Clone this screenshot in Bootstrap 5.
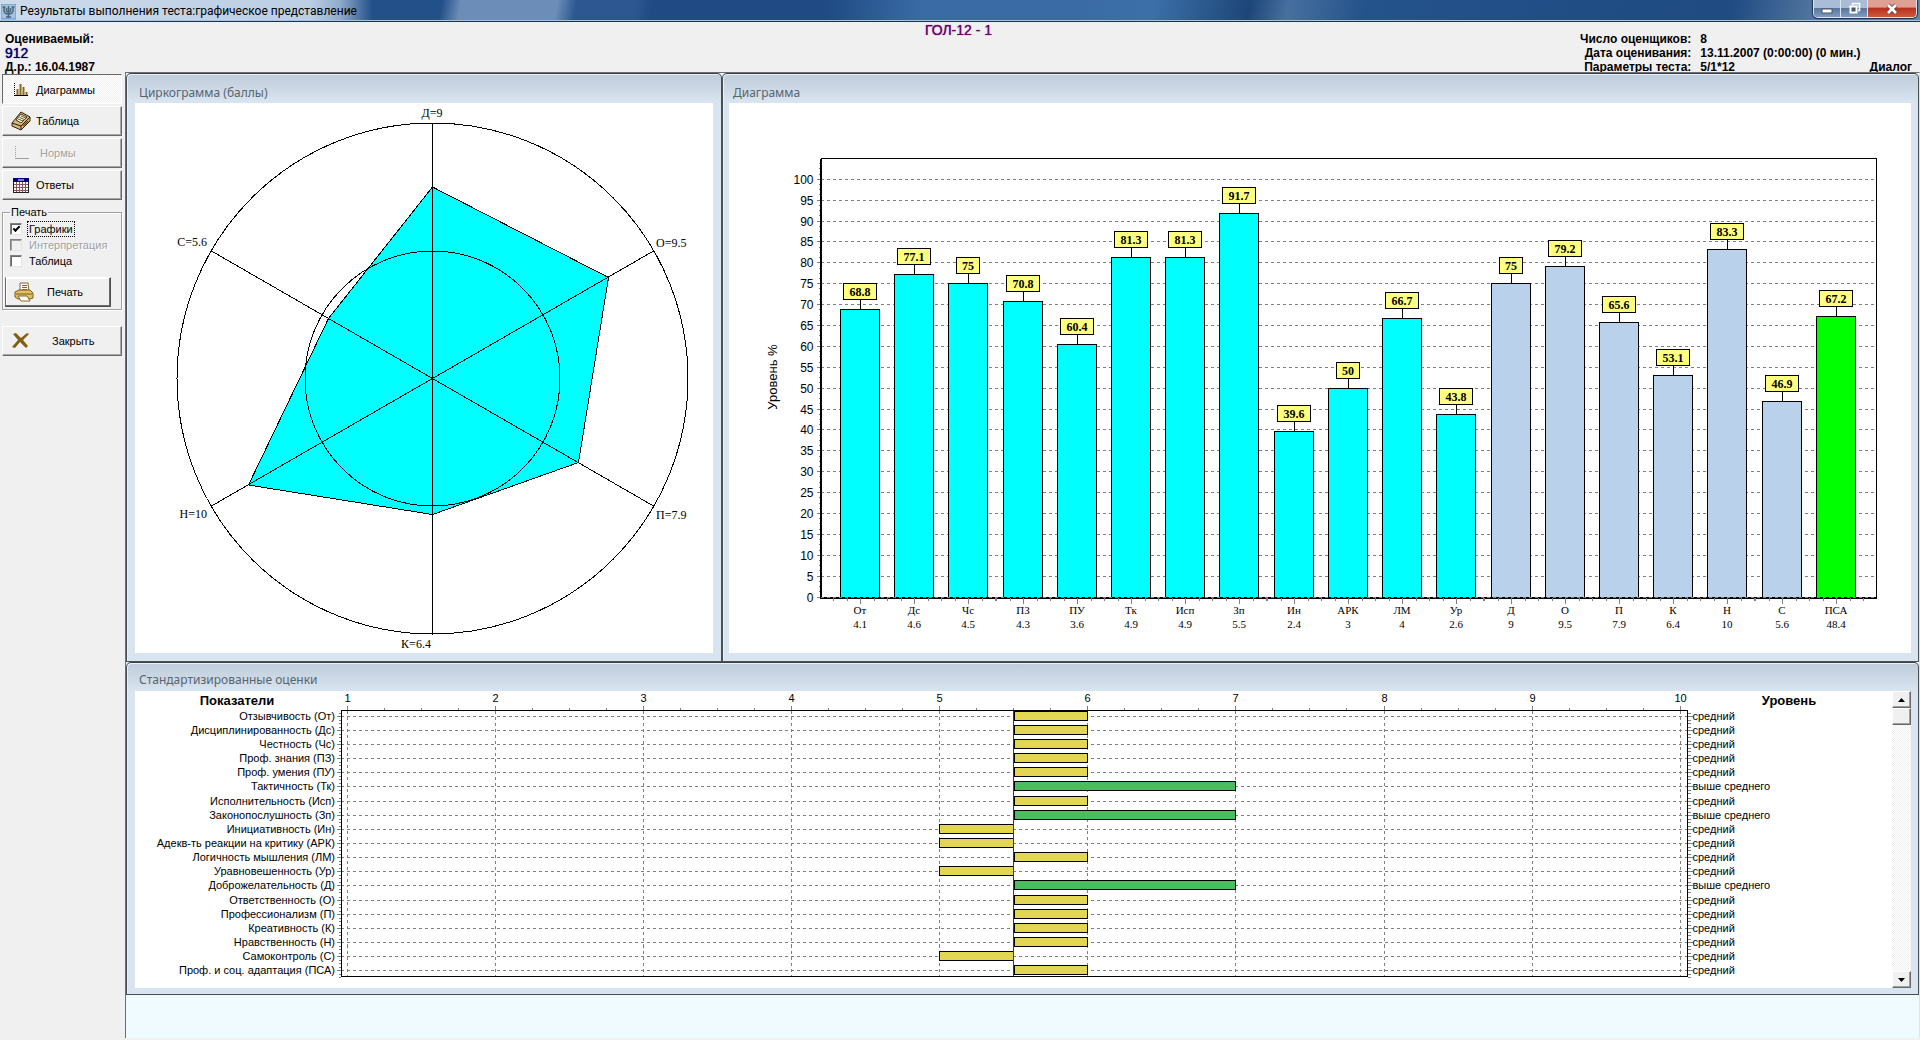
<!DOCTYPE html>
<html lang="ru">
<head>
<meta charset="utf-8">
<meta name="viewport" content="width=device-width, initial-scale=1">
<title>Результаты выполнения теста: графическое представление</title>
<link href="https://cdn.jsdelivr.net/npm/bootstrap@5.3.0/dist/css/bootstrap.min.css" rel="stylesheet">
<style>
  body { font: 12px/14px "Liberation Sans", Arial, sans-serif; color: #000; background: #f0f0f0; }
  .ui-title { font-family: "Noto Sans", "Segoe UI", sans-serif; }
  .window-bar { height: 22px; padding-left: 1px; border-bottom: 1px solid #1b3157; box-shadow: inset 0 -1px #a9c3dd; font-family: Roboto, "Segoe UI", sans-serif;
    background:
      linear-gradient(90deg, rgba(214,226,240,.95) 0, rgba(196,213,233,.95) 310px, rgba(190,210,232,.7) 340px, rgba(190,210,232,0) 372px),
      linear-gradient(100deg, #24508a 0 23%, #6b8db8 24% 29%, #2c5790 30% 33%, #1f4a83 34% 43%, #3a6ba5 48% 56%, #3c6fa8 60%, #1d4678 65%, #47709f 67%, #24528a 71%, #1f4a82 90%, #6485a9 96%); }
  .win-controls { height: 18px; border: 1px solid #dbe6f2; border-top: 0; border-radius: 0 0 5px 5px; overflow: hidden; margin-right: 3px; box-shadow: 0 0 1px 1px #1c2f4c; }
  .win-controls button { border: 0; padding: 0; width: 27px; height: 17px; background: linear-gradient(#a9bed6 0 45%, #58779c 50%, #7f9dbf); border-right: 1px solid #dbe6f2; display: flex; align-items: center; justify-content: center; }
  .win-controls .close-win { width: 48px; border-right: 0; background: linear-gradient(#dfa095 0 40%, #b8321d 50%, #d0593c); }
  .info-head { height: 50px; font-weight: 700; }
  .info-head .subject { padding: 10px 0 0 5px; }
  .info-head .subject-id { font-size: 14px; font-weight: 400; color: #000060; text-shadow: 0 0 1px #000060; }
  .info-head .test-name { font-size: 14px; line-height: 16px; font-weight: 400; color: #6a0070; text-shadow: 0 0 1px #6a0070; }
  .facts { padding-top: 10px; display: grid; grid-template-columns: auto auto auto; column-gap: 9px; }
  .side-pane { width: 125px; padding: 2px 3px 0 2px; flex: none; font-size: 11px; }
  .tool-btn { display: flex; align-items: center; width: 100%; height: 30px; padding: 0; border: 1px solid; border-color: #fff #696969 #696969 #fff; box-shadow: inset -1px -1px #a6a6a6; background: #f0f0f0; margin-bottom: 2px; color: #000; text-align: left; }
  .tool-btn svg { width: 20px; height: 20px; margin: 0 5px 0 8px; flex: none; }
  .tool-btn.pressed { border-color: #696969 #fff #fff #696969; box-shadow: none; padding-top: 2px; background: repeating-conic-gradient(#f0f0f0 0 25%, #fff 0 50%) 0 0 / 2px 2px; }
  .tool-btn:disabled { color: #a0a0a0; text-shadow: 1px 1px #fff; }
  .print-box { border: 1px solid #a0a0a0; box-shadow: 1px 1px #fff, inset 1px 1px #fff; margin: 5px 0 0; padding: 0 10px 2px 2px; height: 105px; min-width: 0; }
  .print-box legend { float: none; width: auto; font-size: 11px; line-height: 14px; margin: 0 0 2px 5px; padding: 0 1px; }
  .opt { display: flex; align-items: center; height: 16px; padding-left: 5px; gap: 6px; white-space: nowrap; }
  .opt input { appearance: none; margin: 0; width: 12px; height: 12px; flex: none; background: #fff; border: 1px solid; border-color: #808080 #e3e3e3 #e3e3e3 #808080; box-shadow: inset 1px 1px #696969; }
  .opt input:disabled { background: #f0f0f0; box-shadow: inset 1px 1px #a0a0a0; }
  .opt input:checked::after { content: ""; display: block; width: 7px; height: 4px; margin: 2px; border: solid #000; border-width: 0 0 2px 2px; transform: rotate(-45deg); }
  .opt label { padding: 0 1px; }
  .opt input:disabled + label { color: #a0a0a0; text-shadow: 1px 1px #fff; }
  .opt .focused { outline: 1px dotted #000; }
  .print-btn { margin-top: 8px; width: 106px; border-color: #fff #505050 #505050 #696969; box-shadow: inset -1px -1px #696969, inset 1px 1px #fff; }
  .workspace { min-width: 0; flex: 1; background: #effbff; border: 1px solid #6d6d6d; border-width: 1px 0 0 1px; border-right: 1px solid #e3e3e3; }
  .app-body { min-height: calc(100vh - 72px); border-bottom: 2px solid #f0f0f0; }
  .pane { border: 1px solid #4a4e55; border-top-color: #3c4046; padding: 0 7px 8px 8px; background: linear-gradient(#bfccd9, #d8e4f0 28px); box-shadow: inset 1px 1px #e9f0f7; min-width: 0; border-radius: 5px 5px 0 0; }
  .pane h2 { font-size: 12px; font-weight: 400; line-height: 16px; margin: 0; padding: 11px 0 2px 4px; color: #58656f; }
  .pane svg { display: block; width: 100%; height: auto; background: #fff; }
  .pane-circle { flex: 578 1 0; padding-right: 8px; }
  .pane-bars { flex: 1182 1 0; padding-left: 6px; }
  .pane-std { padding-bottom: 6px; }
  .pane-std h2 { padding-top: 9px; padding-bottom: 3px; }
  .scroll-col { width: 19px; flex: none; background: repeating-conic-gradient(#f0f0f0 0 25%, #fff 0 50%) 0 0 / 2px 2px; }
  .scroll-col button { height: 17px; padding: 0; border: 1px solid; border-color: #fff #696969 #696969 #fff; box-shadow: inset -1px -1px #a0a0a0; background: #f0f0f0; width: 100%; display: block; }
  .scroll-col svg { width: 7px; height: 4px; margin: auto; background: none; }
  .serif { font-family: "Liberation Serif", "Times New Roman", serif; }
  svg text { fill: #000; }
  .axis { stroke: #000; fill: none; shape-rendering: crispEdges; }
  .grid-line { stroke: #808080; stroke-dasharray: 3 3; shape-rendering: crispEdges; }
  .tick { stroke: #808080; shape-rendering: crispEdges; }
  .bar { stroke: #000; shape-rendering: crispEdges; }
</style>
<script src="https://cdn.jsdelivr.net/npm/bootstrap@5.3.0/dist/js/bootstrap.bundle.min.js"></script>
</head>
<body>
<header>
  <div class="window-bar d-flex align-items-start">
    <svg class="mt-1 me-1" width="15" height="16" viewBox="0 0 15 16" aria-hidden="true"><rect width="15" height="15" fill="#9cc4e4" stroke="#5d9bc8"/><path d="M3 3v3q0 4 4.500 4T12 6V3M7.500 2v12M5 13h5M1.500 3h3M10.500 3h3M5.500 4v3q2 2 4 0V4" fill="none" stroke="#4d6577" stroke-width="1.500"/></svg>
    <span class="flex-grow-1 pt-1">Результаты выполнения теста:графическое представление</span>
    <div class="win-controls d-flex">
      <button type="button" aria-label="Свернуть"><svg width="12" height="12"><rect x="1" y="6" width="10" height="4" fill="#fff" stroke="#4a5668"/></svg></button>
      <button type="button" aria-label="Восстановить"><svg width="13" height="13"><path d="M4.500 3V1.500h7v7H10" fill="none" stroke="#fff" stroke-width="1.500"/><rect x="2.500" y="4.500" width="6" height="6" fill="#4a5668" stroke="#fff" stroke-width="2"/></svg></button>
      <button type="button" class="close-win" aria-label="Закрыть окно"><svg width="12" height="12"><path d="M2 2l8 8M10 2l-8 8" stroke="#6b3838" stroke-width="4.500"/><path d="M2 2l8 8M10 2l-8 8" stroke="#fff" stroke-width="2.800"/></svg></button>
    </div>
  </div>
  <div class="info-head row g-0">
    <div class="col subject text-nowrap">
      <div>Оцениваемый:</div>
      <div class="subject-id">912</div>
      <div>Д.р.: 16.04.1987</div>
    </div>
    <div class="col-auto test-name">ГОЛ-12 - 1</div>
    <div class="col d-flex justify-content-end pe-2">
      <div class="facts text-nowrap">
        <span class="text-end">Число оценщиков:</span><span>8</span><span></span>
        <span class="text-end">Дата оценивания:</span><span>13.11.2007 (0:00:00) (0 мин.)</span><span></span>
        <span class="text-end">Параметры теста:</span><span>5/1*12</span><span class="text-end">Диалог</span>
      </div>
    </div>
  </div>
</header>

<div class="app-body d-flex">
  <aside class="side-pane">
    <button type="button" class="tool-btn pressed" aria-pressed="true"><svg viewBox="0 0 20 20" aria-hidden="true"><path d="M3.500 3v12" stroke="#000" stroke-dasharray="1 1"/><path d="M3 15.500h14" stroke="#000"/><path d="M6.500 15V9M9.500 15V4M12.500 15V7M15.500 15v-3" stroke="#8a6a1c" stroke-width="2"/></svg>Диаграммы</button>
    <button type="button" class="tool-btn"><svg viewBox="0 0 20 20" aria-hidden="true"><path d="M1 12L10 1l9 5v4l-9 9-9-4z" fill="#d8b878" stroke="#2a2010"/><path d="M1 12l9 3 9-9M10 15v4" fill="none" stroke="#2a2010"/><path d="M5 9l5-6 6 3-6 6z" fill="#fff6dc" stroke="#4a3a18"/><path d="M7 8l5 2M8.500 6.500l5 2M10 5l5 2" stroke="#6b5630"/><path d="M12 15l5-5" stroke="#6b4a18" stroke-width="1.500"/></svg>Таблица</button>
    <button type="button" class="tool-btn" disabled><svg viewBox="0 0 20 20" aria-hidden="true"><path d="M4.500 3v12" stroke="#a0a0a0" stroke-dasharray="1 1"/><path d="M4 15.500h14" stroke="#a0a0a0"/></svg><span class="ps-1">Нормы</span></button>
    <button type="button" class="tool-btn"><svg viewBox="0 0 20 20" aria-hidden="true"><rect x="2.500" y="3.500" width="15" height="14" fill="#fff" stroke="#222"/><path d="M2 3h16v4H2z" fill="#000080"/><path d="M7 5h6" stroke="#fff"/><path d="M3 9.500h14M3 12.500h14M3 15.500h14M5.500 7v10M8.500 7v10M11.500 7v10M14.500 7v10" stroke="#8b5560"/></svg>Ответы</button>
    <fieldset class="print-box">
      <legend>Печать</legend>
      <div class="opt"><input type="checkbox" id="opt-graphs" checked><label class="focused" for="opt-graphs">Графики</label></div>
      <div class="opt"><input type="checkbox" id="opt-interp" disabled><label for="opt-interp">Интерпретация</label></div>
      <div class="opt"><input type="checkbox" id="opt-table"><label for="opt-table">Таблица</label></div>
      <button type="button" class="tool-btn print-btn"><svg viewBox="0 0 20 20" aria-hidden="true"><path d="M6 10V1h8l1 9" fill="#fff" stroke="#8a6a1c"/><path d="M8 3.500h5M8 5.500h5M8 7.500h5" stroke="#8a6a1c"/><path d="M1 10l4-2h11l3 3v5l-3 1H4l-3-2z" fill="#e2c06a" stroke="#7b5c14"/><path d="M2 12h16" stroke="#7b5c14"/><path d="M4 14h9l3 5H7z" fill="#fff" stroke="#8a6a1c"/></svg><span class="ps-2">Печать</span></button>
    </fieldset>
    <button type="button" class="tool-btn mt-3"><svg viewBox="0 0 20 20" aria-hidden="true"><path d="M2 3l3-1 5 5 6-5 2 1-6 6 5 6-2 2-6-6-5 6-3-1 6-7z" fill="#806010"/></svg><span class="ps-3">Закрыть</span></button>
  </aside>

  <main class="workspace">
    <div class="d-flex">
      <section class="pane pane-circle">
        <h2 class="ui-title">Циркограмма (баллы)</h2>
        <svg id="circle" viewBox="0 0 578 550" role="img" aria-label="Циркограмма"></svg>
      </section>
      <section class="pane pane-bars">
        <h2 class="ui-title">Диаграмма</h2>
        <svg id="bars" viewBox="0 0 1182 550" role="img" aria-label="Диаграмма"></svg>
      </section>
    </div>
    <section class="pane pane-std">
      <h2 class="ui-title">Стандартизированные оценки</h2>
      <div class="d-flex">
        <div class="flex-grow-1"><svg id="std" viewBox="0 0 1757 297" role="img" aria-label="Стандартизированные оценки"></svg></div>
        <div class="scroll-col d-flex flex-column">
          <button type="button" aria-label="Вверх"><svg viewBox="0 0 7 4"><path d="M0 4L3.500 0 7 4z"/></svg></button>
          <button type="button" aria-label="Ползунок"></button>
          <button type="button" class="mt-auto" aria-label="Вниз"><svg viewBox="0 0 7 4"><path d="M0 0l3.500 4L7 0z"/></svg></button>
        </div>
      </div>
    </section>
  </main>
</div>

<script>
  const line = (x1, y1, x2, y2, cls) => `<line x1="${x1}" y1="${y1}" x2="${x2}" y2="${y2}" class="${cls}"/>`;
  const text = (x, y, s, size, anchor, extra = '') => `<text x="${x}" y="${y}" font-size="${size}" text-anchor="${anchor}" ${extra}>${s}</text>`;
  const snap = v => Math.floor(v) + 0.5;

  // Circle diagram
  (() => {
    const cx = 297.5, cy = 275.5;
    let s = `<circle class="axis" cx="${cx}" cy="${cy}" r="255.5"/>`;
    s += '<polygon class="bar" fill="#00ffff" points="297.5,84 473.5,174.5 443.5,359.5 297.5,411.5 113.5,382 193.5,215.5"/>';
    s += `<circle class="axis" cx="${cx}" cy="${cy}" r="127.5"/>`;
    [[297.5, 20], [518.5, 148], [518.5, 403], [297.5, 531], [76.5, 403], [76.5, 148]].forEach(p => s += line(cx, cy, p[0], p[1], 'axis'));
    [['Д=9', 297, 14, 'middle'], ['О=9.5', 521, 144, 'start'], ['П=7.9', 521, 416, 'start'],
     ['К=6.4', 281, 545, 'middle'], ['Н=10', 72, 415, 'end'], ['С=5.6', 72, 143, 'end']]
      .forEach(l => s += text(l[1], l[2], l[0], 12, l[3], 'class="serif"'));
    document.getElementById('circle').innerHTML = s;
  })();

  // Column chart, level in percent
  const items = [['От', 4.1, 68.8], ['Дс', 4.6, 77.1], ['Чс', 4.5, 75], ['ПЗ', 4.3, 70.8], ['ПУ', 3.6, 60.4], ['Тк', 4.9, 81.3],
    ['Исп', 4.9, 81.3], ['Зп', 5.5, 91.7], ['Ин', 2.4, 39.6], ['АРК', 3, 50], ['ЛМ', 4, 66.7], ['Ур', 2.6, 43.8], ['Д', 9, 75],
    ['О', 9.5, 79.2], ['П', 7.9, 65.6], ['К', 6.4, 53.1], ['Н', 10, 83.3], ['С', 5.6, 46.9], ['ПСА', 48.4, 67.2]];
  (() => {
    const left = 91.5, right = 1147.5, top = 55.5, zero = 494, py = v => snap(zero - v * 4.177);
    let s = '';
    for (let v = 0; v <= 100; v += 5) {
      const y = py(v);
      if (v) s += line(left, y, right, y, 'grid-line');
      s += line(left - 4, y, left, y, 'tick') + text(left - 7, y + 4, v, 12, 'end');
      for (let k = 1; k < 4; k++) { const m = py(v + k * 1.25); s += line(left - 2, m, left, m, 'tick'); }
    }
    s += `<path class="axis" d="M${left} ${top}H${right}V${zero}"/>`;
    s += `<path class="axis" stroke-width="2" d="M${left} ${top}V495H${right}"/>`;
    items.forEach(([name, score, v], i) => {
      const c = snap(131.5 + i * 54.21), y = py(v), w = v % 1 ? 34 : 24;
      const fill = i < 12 ? '#00ffff' : i < 18 ? '#b9d1ea' : '#00ff00';
      for (let k = -2; k < 3; k++) s += line(c + k * 13.5, 495, c + k * 13.5, k ? 498 : 501, 'tick');
      s += `<rect class="bar" x="${c - 20}" y="${y}" width="39" height="${494.5 - y}" fill="${fill}"/>`;
      s += line(c, y - 10, c, y, 'axis');
      s += `<rect class="bar" x="${c - w / 2}" y="${y - 26}" width="${w - 1}" height="16" fill="#ffff80"/>`;
      s += text(c - 0.5, y - 13.5, v, 12, 'middle', 'class="serif" font-weight="700"');
      s += text(c - 0.5, 511, name, 11, 'middle', 'class="serif"') + text(c - 0.5, 525, score, 11, 'middle', 'class="serif"');
    });
    s += line(left, 494.5, right, 494.5, 'grid-line');
    s += text(0, 0, 'Уровень %', 13, 'middle', 'transform="translate(48 274) rotate(-90)"');
    document.getElementById('bars').innerHTML = s;
  })();

  // Standardised scores, bars grow from 5.5
  const rows = [['Отзывчивость (От)', 6], ['Дисциплинированность (Дс)', 6], ['Честность (Чс)', 6], ['Проф. знания (ПЗ)', 6],
    ['Проф. умения (ПУ)', 6], ['Тактичность (Тк)', 7], ['Исполнительность (Исп)', 6], ['Законопослушность (Зп)', 7],
    ['Инициативность (Ин)', 5], ['Адекв-ть реакции на критику (АРК)', 5], ['Логичность мышления (ЛМ)', 6],
    ['Уравновешенность (Ур)', 5], ['Доброжелательность (Д)', 7], ['Ответственность (О)', 6], ['Профессионализм (П)', 6],
    ['Креативность (К)', 6], ['Нравственность (Н)', 6], ['Самоконтроль (С)', 5], ['Проф. и соц. адаптация (ПСА)', 6]];
  (() => {
    const left = 206, right = 1552.5, top = 19.5, bottom = 285.5, px = v => snap(212.3 + 148.1 * (v - 1));
    let s = text(102, 14, 'Показатели', 13, 'middle', 'font-weight="700"') + text(1654, 14, 'Уровень', 13, 'middle', 'font-weight="700"');
    for (let v = 1; v <= 10; v++) {
      s += text(px(v), 11, v, 11, 'middle') + line(px(v), 15, px(v), top, 'tick') + line(px(v), top, px(v), bottom, 'grid-line');
      if (v < 10) for (let k = 1; k < 4; k++) s += line(px(v + k / 4), 17, px(v + k / 4), top, 'tick');
    }
    rows.forEach(([name, v], i) => {
      const y = snap(25.2 + 14.143 * i), a = px(Math.min(v, 5.5)), b = px(Math.max(v, 5.5));
      s += line(left - 4, y, left, y, 'tick') + line(right, y, right + 5, y, 'tick') + line(left, y, right, y, 'grid-line');
      for (let k = -1; k < 3; k++) { const m = y + k * 3.5; s += line(left - 2, m, left, m, 'tick') + line(right, m, right + 3, m, 'tick'); }
      s += text(200, y + 3.5, name, 11, 'end') + text(right + 5, y + 3.5, v === 7 ? 'выше среднего' : 'средний', 11, 'start');
      const x0 = v > 5.5 ? a + 1 : a;
      s += `<rect class="bar" x="${x0}" y="${y - 5}" width="${b - x0}" height="9" fill="${v === 7 ? '#4abd5c' : '#e3d652'}"/>`;
    });
    s += `<line x1="${px(5.5)}" y1="${top}" x2="${px(5.5)}" y2="${bottom}" stroke="#c00000" shape-rendering="crispEdges"/>`;
    s += `<rect class="axis" x="${left}" y="${top}" width="${right - left}" height="${bottom - top}"/>`;
    document.getElementById('std').innerHTML = s;
  })();
</script>
</body>
</html>
